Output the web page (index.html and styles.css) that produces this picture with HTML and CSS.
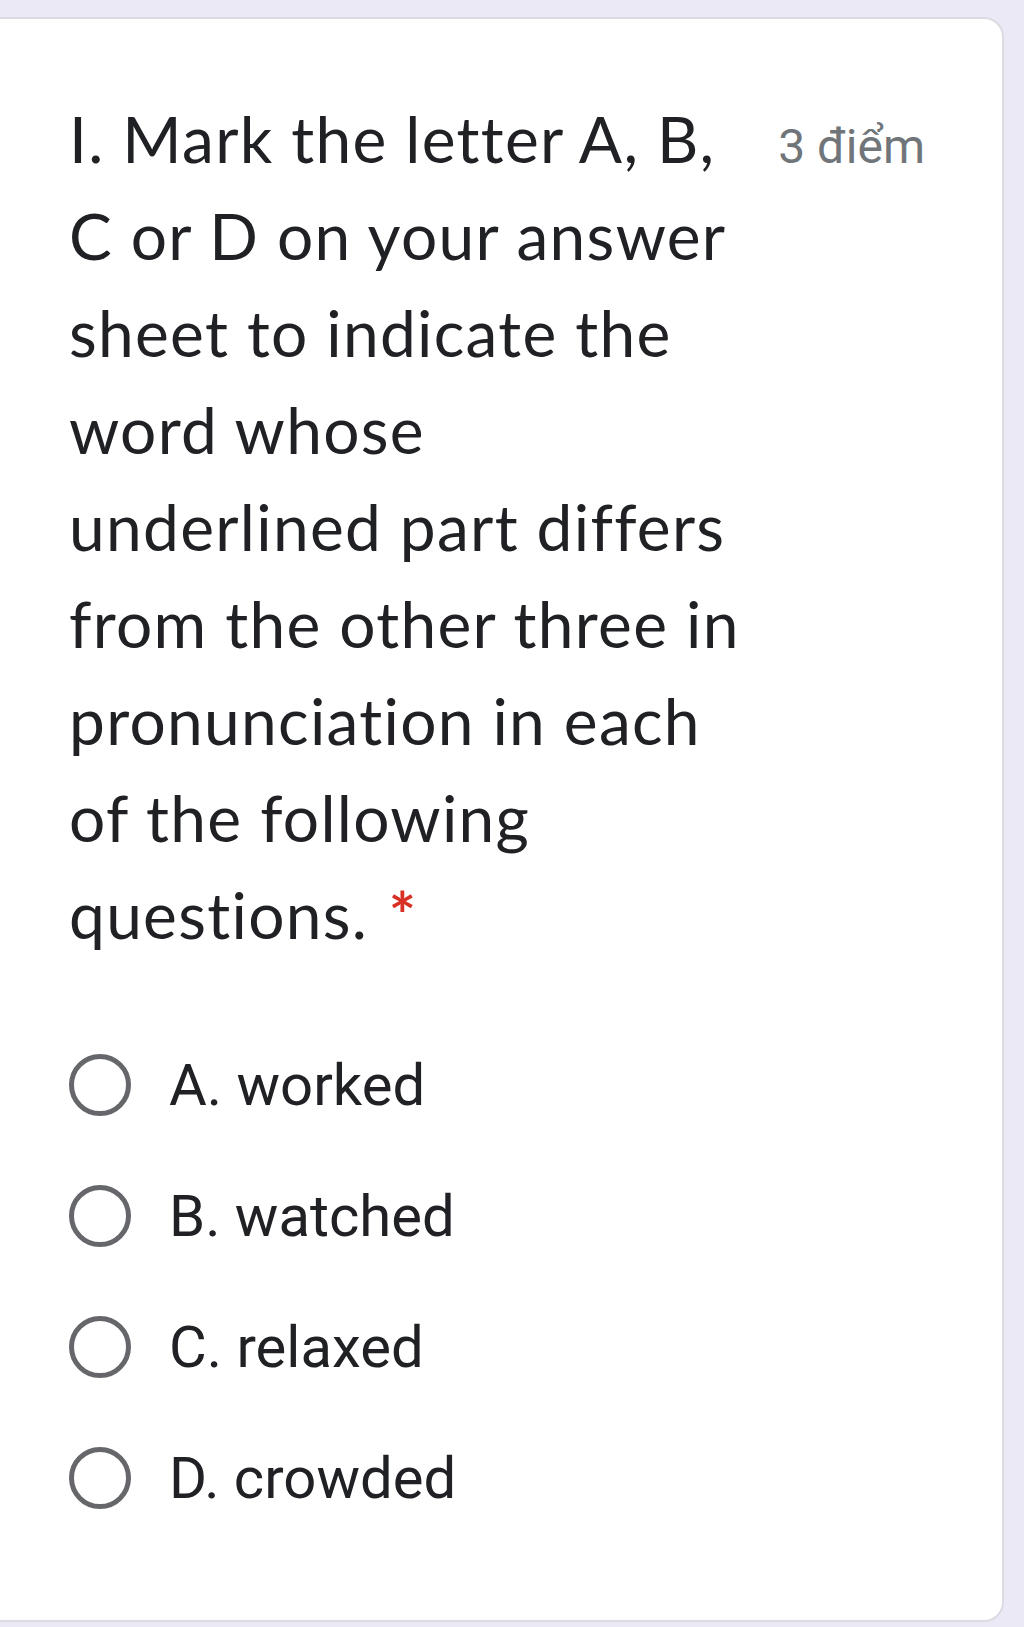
FILE: index.html
```html
<!DOCTYPE html>
<html lang="vi">
<head>
<meta charset="utf-8">
<title>Question</title>
<link rel="stylesheet" href="styles.css">
</head>
<body>
<div class="card">
  <div class="header">
    <div class="title">I. Mark the letter A, B, C or D on your answer sheet to indicate the word whose underlined part differs from the other three in pronunciation in each of the following questions. <span class="req">*</span></div>
    <div class="points">3 điểm</div>
  </div>
  <div class="options">
    <label class="option"><span class="radio"></span><span class="label">A. worked</span></label>
    <label class="option"><span class="radio"></span><span class="label">B. watched</span></label>
    <label class="option"><span class="radio"></span><span class="label">C. relaxed</span></label>
    <label class="option"><span class="radio"></span><span class="label">D. crowded</span></label>
  </div>
</div>
</body>
</html>
```
FILE: styles.css
```css
html, body {
  margin: 0;
  padding: 0;
}
body {
  background: #ece9f6;
  width: 1024px;
  height: 1627px;
  overflow: hidden;
}
.card {
  box-sizing: border-box;
  margin: 17px 0 0 -20px;
  width: 1024px;
  height: 1605px;
  background: #ffffff;
  border: 2px solid #dcdbe2;
  border-radius: 20px;
  padding: 0 77px 0 87px;
}
.header {
  display: flex;
  align-items: baseline;
  justify-content: space-between;
  padding-top: 71px;
}
.title {
  width: 676px;
  font-family: "Lato", "Open Sans", sans-serif;
  font-size: 64px;
  line-height: 97px;
  letter-spacing: 1.3px;
  font-variant-ligatures: none;
  color: #202124;
}
.req {
  color: #d93025;
  font-weight: 700;
  letter-spacing: 0;
  margin-left: 3px;
}
.points {
  font-family: "Roboto", sans-serif;
  font-size: 48px;
  color: #70757a;
  white-space: nowrap;
}
.options {
  display: flex;
  flex-direction: column;
  margin-top: 56px;
}
.option {
  display: flex;
  align-items: center;
  height: 131px;
  gap: 38px;
}
.radio {
  box-sizing: border-box;
  width: 62px;
  height: 62px;
  border: 5px solid #66676b;
  border-radius: 50%;
  flex: 0 0 auto;
}
.label {
  font-family: "Roboto", sans-serif;
  font-size: 58px;
  color: #202124;
}
```
